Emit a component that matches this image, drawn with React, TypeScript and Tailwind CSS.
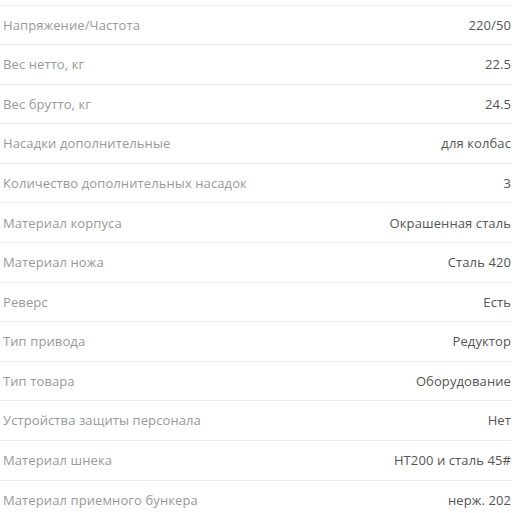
import React from 'react';

const specs: [string, string][] = [
  ['Напряжение/Частота', '220/50'],
  ['Вес нетто, кг', '22.5'],
  ['Вес брутто, кг', '24.5'],
  ['Насадки дополнительные', 'для колбас'],
  ['Количество дополнительных насадок', '3'],
  ['Материал корпуса', 'Окрашенная сталь'],
  ['Материал ножа', 'Сталь 420'],
  ['Реверс', 'Есть'],
  ['Тип привода', 'Редуктор'],
  ['Тип товара', 'Оборудование'],
  ['Устройства защиты персонала', 'Нет'],
  ['Материал шнека', 'HT200 и сталь 45#'],
  ['Материал приемного бункера', 'нерж. 202'],
];

const App: React.FC = () => {
  return (
    <div className="w-[519px] h-[513px] overflow-hidden bg-white pt-[4.5px] font-['Open_Sans',sans-serif] text-[13px] tracking-[0.1px]">
      <div className="w-[512px]">
        {specs.map(([label, value]) => (
          <div
            key={label}
            className="h-[39.6px] flex items-center justify-between border-t border-[#ebebeb] pt-[1px] pl-[3px] pr-[1px]"
          >
            <span className="text-[#999999]">{label}</span>
            <span className="text-[#555555]">{value}</span>
          </div>
        ))}
      </div>
    </div>
  );
};

export default App;
